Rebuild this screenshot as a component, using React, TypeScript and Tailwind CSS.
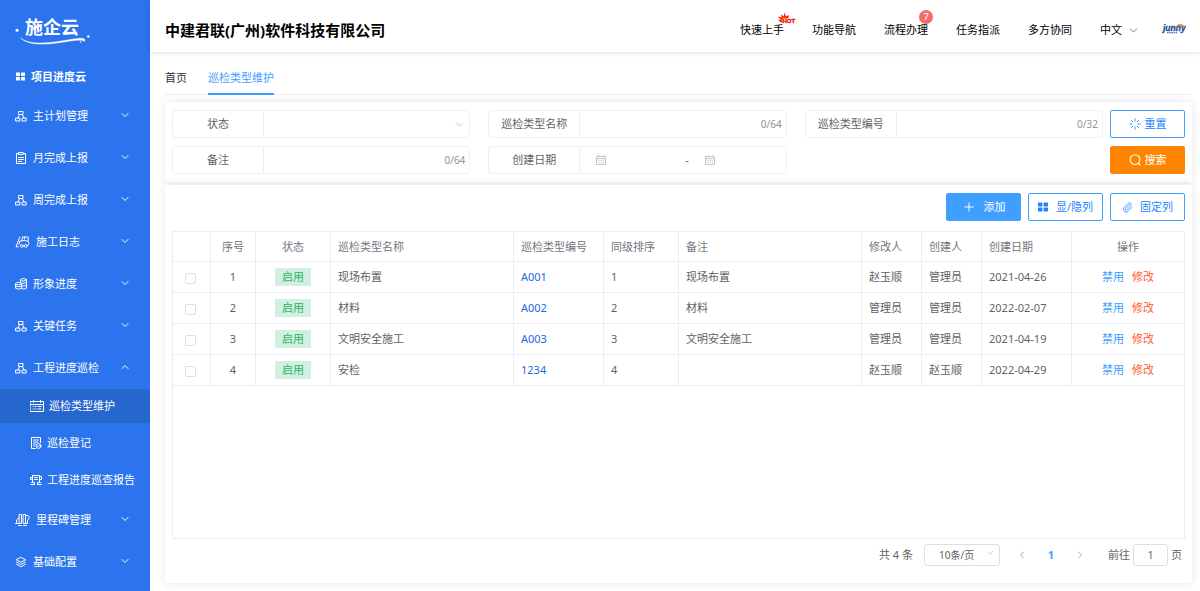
import React from "react";
import { ChevronDown, ChevronLeft, ChevronRight, ChevronUp, Loader, Paperclip, Plus } from "lucide-react";

type IconProps = { className?: string };

function Tiles({ className = "" }: IconProps) {
  return (
    <svg viewBox="0 0 10 10" className={className} fill="currentColor" aria-hidden="true">
      <rect x="0" y="0.5" width="4.4" height="4" rx="0.4" />
      <rect x="5.6" y="0.5" width="4.4" height="4" rx="0.4" />
      <rect x="0" y="5.5" width="4.4" height="4" rx="0.4" />
      <rect x="5.6" y="5.5" width="4.4" height="4" rx="0.4" />
    </svg>
  );
}

function Line({ className = "", w = 12, children }: IconProps & { w?: number; children: React.ReactNode }) {
  return (
    <svg
      viewBox={`0 0 ${w} 12`}
      className={`h-3 shrink-0 ${className}`}
      fill="none"
      stroke="currentColor"
      strokeWidth="1"
      strokeLinejoin="round"
      strokeLinecap="round"
      aria-hidden="true"
    >
      {children}
    </svg>
  );
}

const TreeIcon = () => (
  <Line className="w-3">
    <rect x="4" y="1.5" width="4" height="3" />
    <path d="M4.6 4.5 L3 8 M7.4 4.5 L9 8" />
    <rect x="1" y="8" width="3.8" height="3" />
    <rect x="7.4" y="8" width="3.8" height="3" />
  </Line>
);

const ClipboardIcon = () => (
  <Line className="w-3">
    <path d="M3.5 1.5 H1.5 V11.5 H10.5 V1.5 H8.5" />
    <rect x="3.8" y="0.5" width="4.4" height="2" />
    <path d="M3.5 5.5 H8.5 M3.5 7.5 H8.5 M3.5 9.5 H6.5" />
  </Line>
);

const LogIcon = () => (
  <Line className="w-[15px]" w={15}>
    <path d="M4.8 1 L1 10.8 H3.5 M7 4.6 L7.4 1 H13.2 V4.8 M9.5 1 V3 M5 5.2 Q9.5 3.5 13 5.2 L14 7.5 L12.8 9.5 M5 5.2 L4 8" />
    <circle cx="6.8" cy="9.9" r="1.4" />
    <circle cx="10.8" cy="9.9" r="1.4" />
  </Line>
);

const CoinsIcon = () => (
  <Line className="w-3">
    <ellipse cx="8.5" cy="1.8" rx="3" ry="1.2" />
    <path d="M5.5 1.8 V4 M11.5 1.8 V10 Q10.5 11.3 7 11 M11.5 4.5 Q10 5.7 7 5.3 M11.5 7.3 Q10 8.5 7 8" />
    <ellipse cx="3.6" cy="5.6" rx="3" ry="1.2" />
    <path d="M0.6 5.6 V10.2 Q3.6 12.2 6.6 10.2 V5.6 M0.6 8 Q3.6 9.8 6.6 8" />
  </Line>
);

const MilestoneIcon = () => (
  <Line className="w-[15px]" w={15}>
    <path d="M4.5 0.5 H6.5 V9.5 H4.5 Z M8.5 0.5 H10.5 V9.5 H8.5 Z M4.5 3.5 L1.5 6 V9.5 M0.5 9.5 H4.5 M10.5 1.5 H13 L14.3 3.5 L12.5 6.5 V9.5 H10.5 M3.5 11.5 H6.5 M8.5 11.5 H11.5" />
  </Line>
);

const LayersIcon = () => (
  <Line className="w-3">
    <path d="M6 1.5 L10.5 3.8 L6 6.2 L1.5 3.8 Z M1.5 6 L6 8.5 L10.5 6 M1.5 8.2 L6 10.8 L10.5 8.2" />
  </Line>
);

const CalendarGrid = () => (
  <Line className="w-[14px]" w={14}>
    <path d="M0.5 1.5 H13.5 V11.5 H0.5 Z M0.5 4.5 H13.5 M3.5 0.5 V2.5 M10.5 0.5 V2.5 M5 6.5 H6 M8 6.5 H11 M3 6.5 H3.2 M3 9 H3.2 M5 9 H6 M8 9 H11" />
  </Line>
);

const RegisterIcon = () => (
  <Line className="w-3">
    <path d="M5.5 11.5 H1.5 V0.5 H10.5 V5.5 M3.5 3 H8.5 M3.5 5 H8 M3.5 7 H5.5 M3.5 9 H4.5" />
    <circle cx="8.6" cy="9" r="2.4" />
    <path d="M7.7 9 L8.4 9.7 L9.6 8.4" />
  </Line>
);

const ReportIcon = () => (
  <Line className="w-3">
    <path d="M2.5 1.5 H9.5 V8.5 M2.5 1.5 V8.5 M0.5 3.5 H2.5 M0.5 3.5 V5.5 H2.5 M9.5 2.5 H11.5 V5.5 H9.5 M4.5 3.5 H7.5 M4.5 5.5 H7.5 M0.5 10.5 H4.5 M7.5 10.5 H11.5 M1.5 8.5 H4.5 V10.5 M7.5 10.5 V8.5 H10.5" />
  </Line>
);

const MiniCalendar = ({ className = "" }: IconProps) => (
  <svg viewBox="0 0 10 10" className={`size-[10px] shrink-0 text-[#c0c4cc] ${className}`} fill="none" stroke="currentColor" aria-hidden="true">
    <path d="M0.5 1.5 H9.5 V9.5 H0.5 Z M0.5 3.7 H9.5 M2.7 0.3 V2.2 M7.3 0.3 V2.2" />
    <path d="M2.3 5.5 H7.8 M2.3 7.5 H7.8" strokeDasharray="1.2 1" />
  </svg>
);

const SearchIcon = () => (
  <svg viewBox="0 0 12 12" className="size-3" fill="none" stroke="currentColor" strokeWidth="1.1" strokeLinecap="round" aria-hidden="true">
    <circle cx="6" cy="5.6" r="4.9" />
    <path d="M9.4 9.3 L11.2 11.2" />
  </svg>
);

const topMenu = [
  { label: "主计划管理", icon: <TreeIcon /> },
  { label: "月完成上报", icon: <ClipboardIcon /> },
  { label: "周完成上报", icon: <TreeIcon /> },
  { label: "施工日志", icon: <LogIcon /> },
  { label: "形象进度", icon: <CoinsIcon /> },
  { label: "关键任务", icon: <TreeIcon /> },
  {
    label: "工程进度巡检",
    icon: <TreeIcon />,
    children: [
      { label: "巡检类型维护", icon: <CalendarGrid />, active: true },
      { label: "巡检登记", icon: <RegisterIcon /> },
      { label: "工程进度巡查报告", icon: <ReportIcon /> },
    ],
  },
  { label: "里程碑管理", icon: <MilestoneIcon /> },
  { label: "基础配置", icon: <LayersIcon /> },
];

function Sidebar() {
  return (
    <aside className="w-[150px] shrink-0 bg-[#2b74ee] text-white">
      <div className="relative h-[58px] pt-[15px] pl-[25px]">
        <span className="block text-[18px] leading-6 font-bold">施企云</span>
        <svg viewBox="0 0 80 34" className="absolute top-[14px] left-[12px] h-[34px] w-20" fill="none" aria-hidden="true">
          <circle cx="5" cy="16.3" r="1.5" fill="white" />
          <path d="M8.5 24 C17 31 36 29.5 52 26.5 C66 24 75 22.5 72.5 27.5 C71.5 25.5 64 26 52 28 C36 30.8 16 32 8.5 24 Z" fill="white" stroke="white" strokeWidth="0.4" />
          <circle cx="76.3" cy="22.5" r="1.2" fill="white" />
          <circle cx="68.8" cy="28" r="0.8" fill="white" />
        </svg>
      </div>
      <nav>
        <a href="#cloud" className="flex h-[37px] items-center gap-[6px] pl-4 font-bold">
          <Tiles className="size-[9px]" />
          项目进度云
        </a>
        <ul>
          {topMenu.map((item) => (
            <li key={item.label}>
              <button type="button" aria-expanded={!!item.children} className="flex h-[42px] w-full items-center gap-[6px] pr-[19px] pl-[15px]">
                {item.icon}
                <span>{item.label}</span>
                {item.children ? (
                  <ChevronUp className="mb-[3px] ml-auto size-3" strokeWidth={1.9} />
                ) : (
                  <ChevronDown className="mb-[3px] ml-auto size-3" strokeWidth={1.9} />
                )}
              </button>
              {item.children && (
                <ul className="flex flex-col gap-[3px] pb-[2px]">
                  {item.children.map((sub) => (
                    <li key={sub.label}>
                      <a
                        href="#sub"
                        className={`flex h-[34px] items-center gap-[5px] pl-[30px] whitespace-nowrap ${sub.active ? "bg-[#2566cf]" : ""}`}
                      >
                        {sub.icon}
                        {sub.label}
                      </a>
                    </li>
                  ))}
                </ul>
              )}
            </li>
          ))}
        </ul>
      </nav>
    </aside>
  );
}

function Header() {
  return (
    <header className="flex h-[52px] shrink-0 items-center justify-between bg-white pt-2 pr-[14px] pl-[15px] text-black shadow-[0_1px_5px_rgba(0,0,0,0.12)]">
      <h1 className="text-[15px] font-bold">中建君联(广州)软件科技有限公司</h1>
      <nav className="flex items-center gap-7">
        <a href="#start" className="relative">
          快速上手
          <svg viewBox="0 0 20 13" className="absolute -top-[10px] -right-[13px] h-[13px] w-5" aria-hidden="true">
            <path d="M5 11 L1.2 8 L3.8 7.6 L0.6 4.6 L4.6 5.4 L4.4 2.2 L6.8 4.4 L7.6 0.4 L9 4.4 L12.4 3 L11 6.2 L6 7 Z" fill="#f5200c" />
            <path d="M4.4 7.5 L6.4 5.4 L9.6 6 L5.6 9.2 Z" fill="#ffb300" />
            <text x="5.4" y="11" fontSize="6" fontWeight="900" fill="#f00" stroke="#f00" strokeWidth="0.3" fontFamily="Liberation Sans, sans-serif">HOT</text>
          </svg>
        </a>
        <a href="#nav">功能导航</a>
        <a href="#flow" className="relative">
          流程办理
          <span className="absolute -top-[12px] -right-[5px] flex size-[14px] items-center justify-center rounded-full bg-[#f56c6c] text-[9px] text-white">7</span>
        </a>
        <a href="#assign">任务指派</a>
        <a href="#collab">多方协同</a>
        <button type="button" className="flex items-center gap-[5px]">
          中文
          <ChevronDown className="size-[13px] text-[#606266]" strokeWidth={1.5} />
        </button>
        <a href="#home" className="-ml-[6px] w-6" aria-label="junny">
          <svg viewBox="0 0 24 12" className="h-3 w-6" aria-hidden="true">
            <text x="1" y="7" fontSize="8.5" fontWeight="700" fontStyle="italic" fill="#1c4a9c" stroke="#1c4a9c" strokeWidth="0.3" fontFamily="Liberation Sans, sans-serif">junny</text>
            <path d="M15 1.8 Q19 -0.4 22 2.6" stroke="#f08a24" strokeWidth="1.5" fill="none" />
            <path d="M5 8.7 H15" stroke="#1c4a9c" strokeWidth="1.1" strokeDasharray="1.6 0.6" />
          </svg>
        </a>
      </nav>
    </header>
  );
}

function Field({ id, label, children }: { id: string; label: string; children: React.ReactNode }) {
  return (
    <div className="flex h-7 min-w-0 rounded-[4px] border border-[#f0f0f2] text-[#606266]">
      <label htmlFor={id} className="flex w-[91px] shrink-0 items-center justify-center border-r border-[#f0f0f2]">
        {label}
      </label>
      <div className="relative flex min-w-0 flex-1 items-center">{children}</div>
    </div>
  );
}

function Counted({ id, max }: { id: string; max: number }) {
  return (
    <>
      <input id={id} type="text" maxLength={max} className="h-full min-w-0 flex-1 bg-transparent px-2 outline-none" />
      <span className="pr-1 text-[10px] text-[#909399]">0/{max}</span>
    </>
  );
}

const btn = "flex h-7 w-[75px] items-center justify-center rounded-[2px] border";

function Filters() {
  return (
    <form className="flex gap-[7px] bg-white px-[7px] py-2 shadow-[0_0_9px_rgba(0,0,0,0.1)]" onSubmit={(e) => e.preventDefault()}>
      <div className="grid flex-1 grid-cols-3 gap-x-[18px] gap-y-2">
        <Field id="status" label="状态">
          <select id="status" defaultValue="" className="h-full w-full appearance-none bg-transparent px-2 outline-none">
            <option value=""></option>
            <option value="on">启用</option>
            <option value="off">禁用</option>
          </select>
          <ChevronDown className="pointer-events-none absolute right-[3px] size-[13px] text-[#c0c4cc]" strokeWidth={1.8} />
        </Field>
        <Field id="name" label="巡检类型名称"><Counted id="name" max={64} /></Field>
        <Field id="code" label="巡检类型编号"><Counted id="code" max={32} /></Field>
        <Field id="note" label="备注"><Counted id="note" max={64} /></Field>
        <Field id="from" label="创建日期">
          <MiniCalendar className="ml-4" />
          <input id="from" type="text" className="w-[79px] min-w-0 bg-transparent px-1 outline-none" />
          <span>-</span>
          <MiniCalendar className="ml-4" />
          <input aria-label="结束日期" type="text" className="min-w-0 flex-1 bg-transparent px-1 outline-none" />
        </Field>
      </div>
      <div className="flex flex-col gap-2">
        <button type="reset" className={`${btn} gap-1 border-[#409eff] text-[#1d84ff]`}>
          <Loader className="size-3" strokeWidth={1.8} />
          重置
        </button>
        <button type="submit" className={`${btn} gap-1 border-[#ff8400] bg-[#ff8400] text-white`}>
          <SearchIcon />
          搜索
        </button>
      </div>
    </form>
  );
}

const rows = [
  ["现场布置", "A001", "1", "现场布置", "赵玉顺", "管理员", "2021-04-26"],
  ["材料", "A002", "2", "材料", "管理员", "管理员", "2022-02-07"],
  ["文明安全施工", "A003", "3", "文明安全施工", "管理员", "管理员", "2021-04-19"],
  ["安检", "1234", "4", "", "赵玉顺", "赵玉顺", "2022-04-29"],
];

const cell = "border-r border-b border-[#ebeef5] px-[7px] whitespace-nowrap";

function DataTable() {
  return (
    <table className="w-full table-fixed border-separate border-spacing-0 text-left text-[#606266]">
      <colgroup>
        <col className="w-[38px]" />
        <col className="w-[45px]" />
        <col className="w-[75px]" />
        <col />
        <col className="w-[90px]" />
        <col className="w-[75px]" />
        <col />
        <col className="w-[60px]" />
        <col className="w-[60px]" />
        <col className="w-[90px]" />
        <col className="w-[112px]" />
      </colgroup>
      <thead>
        <tr className="h-[30px] text-[#73767d]">
          <th className={cell} aria-label="选择"></th>
          <th className={`${cell} text-center font-normal`}>序号</th>
          <th className={`${cell} text-center font-normal`}>状态</th>
          <th className={`${cell} font-normal`}>巡检类型名称</th>
          <th className={`${cell} font-normal`}>巡检类型编号</th>
          <th className={`${cell} font-normal`}>同级排序</th>
          <th className={`${cell} font-normal`}>备注</th>
          <th className={`${cell} font-normal`}>修改人</th>
          <th className={`${cell} font-normal`}>创建人</th>
          <th className={`${cell} font-normal`}>创建日期</th>
          <th className={`${cell} border-r-0 text-center font-normal`}>操作</th>
        </tr>
      </thead>
      <tbody>
        {rows.map(([name, code, order, note, editor, creator, date], i) => (
          <tr key={code} className="h-[31px]">
            <td className={`${cell} pt-[3px]`}>
              <input
                type="checkbox"
                aria-label={`选择 ${name}`}
                className="ml-[5px] block size-[11px] appearance-none rounded-[2px] border border-[#dcdfe6] bg-white checked:bg-[#409eff]"
              />
            </td>
            <td className={`${cell} text-center`}>{i + 1}</td>
            <td className={`${cell} text-center`}>
              <span className="mx-auto flex h-[18px] w-9 items-center justify-center bg-[#d1f0df] text-[#2fb36b]">启用</span>
            </td>
            <td className={cell}>{name}</td>
            <td className={cell}>
              <a href="#detail" className="text-[#2468e6]">{code}</a>
            </td>
            <td className={cell}>{order}</td>
            <td className={cell}>{note}</td>
            <td className={cell}>{editor}</td>
            <td className={cell}>{creator}</td>
            <td className={cell}>{date}</td>
            <td className={`${cell} border-r-0`}>
              <div className="flex justify-center gap-2">
                <button type="button" className="text-[#409eff]">禁用</button>
                <button type="button" className="text-[#ff5a2b]">修改</button>
              </div>
            </td>
          </tr>
        ))}
      </tbody>
    </table>
  );
}

function Pagination() {
  return (
    <div className="flex h-8 items-center justify-end pr-[3px] text-[#606266]">
      <span>共 4 条</span>
      <div className="relative ml-[11px] flex h-[22px] w-[76px] items-center rounded-[3px] border border-[#dcdfe6]">
        <select aria-label="每页条数" className="h-full w-full appearance-none bg-transparent pl-[14px] text-[10px] outline-none">
          <option>10条/页</option>
          <option>20条/页</option>
        </select>
        <ChevronDown className="pointer-events-none absolute top-[2px] right-[3px] size-3 text-[#c0c4cc]" strokeWidth={1.8} />
      </div>
      <button type="button" aria-label="上一页" className="ml-4 text-[#a8abb2]"><ChevronLeft className="size-3" strokeWidth={2} /></button>
      <button type="button" className="w-[46px] font-bold text-[#409eff]">1</button>
      <button type="button" aria-label="下一页" className="mr-[22px] text-[#a8abb2]"><ChevronRight className="size-3" strokeWidth={2} /></button>
      <label htmlFor="page">前往</label>
      <input id="page" type="text" defaultValue="1" className="mx-[3px] h-[22px] w-[35px] rounded-[3px] border border-[#dcdfe6] text-center text-[10px] outline-none" />
      <span>页</span>
    </div>
  );
}

export default function App() {
  return (
    <div className="flex min-h-screen bg-white font-['Noto_Sans','Noto_Sans_CJK_SC',sans-serif] text-[11px] leading-4">
      <Sidebar />
      <div className="flex min-w-0 flex-1 flex-col">
        <Header />
        <main className="flex flex-1 flex-col pr-2 pb-2 pl-[15px]">
          <div className="flex h-[43px] shrink-0 items-stretch gap-[21px] border-b border-[#f0f0f2] text-[#303133]">
            <a href="#home" className="flex items-center pt-[9px]">首页</a>
            <a href="#types" className="-mb-px flex items-center border-b-2 border-[#409eff] pt-[10px] text-[#409eff]">巡检类型维护</a>
          </div>
          <div className="mt-[7px] flex flex-1 flex-col gap-[3px]">
            <Filters />
            <section className="flex flex-1 flex-col bg-white px-[7px] pt-2 pb-3 shadow-[0_0_9px_rgba(0,0,0,0.1)]">
              <div className="mb-[10px] flex justify-end gap-[7px]">
                <button type="button" className={`${btn} gap-2 border-[#409eff] bg-[#409eff] text-white`}>
                  <Plus className="size-[14px]" strokeWidth={1.7} />
                  添加
                </button>
                <button type="button" className={`${btn} gap-2 border-[#409eff] text-[#1d84ff]`}>
                  <Tiles className="size-[10px]" />
                  显/隐列
                </button>
                <button type="button" className={`${btn} gap-[7px] border-[#409eff] text-[#1d84ff]`}>
                  <Paperclip className="size-[11px]" strokeWidth={1.7} />
                  固定列
                </button>
              </div>
              <div className="flex-1 border border-[#ebeef5]">
                <DataTable />
              </div>
              <Pagination />
            </section>
          </div>
        </main>
      </div>
    </div>
  );
}
